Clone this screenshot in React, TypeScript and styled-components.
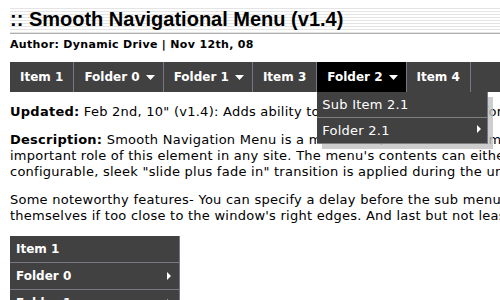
import React from 'react'
import styled, { createGlobalStyle } from 'styled-components'

const GlobalStyle = createGlobalStyle`
  html, body {
    margin: 0;
    padding: 0;
    background: #fff;
    overflow: hidden;
  }
  body {
    font-family: "DejaVu Sans", Verdana, sans-serif;
    color: #000;
  }
`

const Page = styled.div`
  width: 900px;
  padding: 6px 10px 0;
`

const Title = styled.h2`
  margin: 0;
  padding: 2px 0;
  font: bold 20px/23px "Liberation Sans", Arial, sans-serif;
  background: repeating-linear-gradient(
    to bottom,
    #fff 0,
    #fff 2px,
    #e4e4e4 2px,
    #e4e4e4 3px
  );
  border-bottom: 1px solid #b0b0b0;
`

const Byline = styled.div`
  margin-top: 4px;
  font: bold 11px/13px "DejaVu Sans", Verdana, sans-serif;
  letter-spacing: 0.33px;
`

const MenuBar = styled.ul`
  display: flex;
  margin: 11px 0 0;
  padding: 0;
  list-style: none;
  background: #414141;
  font: bold 12px/14px "DejaVu Sans", Verdana, sans-serif;
`

const MenuItem = styled.li`
  position: relative;
`

const MenuLink = styled.a<{ $selected?: boolean; $folder?: boolean }>`
  display: block;
  position: relative;
  padding: 8px ${(p) => (p.$folder ? '23px' : '10px')} 8px 10px;
  border-right: 1px solid #778;
  background: ${(p) => (p.$selected ? '#000' : '#414141')};
  color: #fff;
  text-decoration: none;
  white-space: nowrap;
`

const DownArrow = styled.svg`
  position: absolute;
  top: 12px;
  right: 7px;
`

const RightArrow = styled.svg<{ $top: number; $right: number }>`
  position: absolute;
  top: ${(p) => p.$top}px;
  right: ${(p) => p.$right}px;
`

const SubMenu = styled.ul`
  position: absolute;
  top: 100%;
  left: 0;
  z-index: 10;
  margin: 0;
  padding: 0;
  list-style: none;
  box-shadow: 5px 5px 0 rgba(192, 192, 192, 0.8);
`

const SubLink = styled.a`
  display: block;
  position: relative;
  width: 160px;
  padding: 5px;
  font: normal 13px/15px "DejaVu Sans", Verdana, sans-serif;
  letter-spacing: 0.25px;
  background: #414141;
  color: #fff;
  text-decoration: none;
  border-right: 1px solid #778;
  border-bottom: 1px solid gray;
  white-space: nowrap;
`

const Content = styled.div`
  font-size: 13px;
  line-height: 16px;
  letter-spacing: 0.25px;
`

const Para = styled.p`
  margin: 12px 0;
  white-space: nowrap;
`

const SideMenu = styled.ul`
  margin: 0;
  padding: 0;
  width: 170px;
  list-style: none;
  font: bold 12px/14px "DejaVu Sans", Verdana, sans-serif;
`

const SideLink = styled.a`
  display: block;
  position: relative;
  padding: 6px;
  background: #414141;
  color: #fff;
  text-decoration: none;
  border-right: 1px solid #778;
  border-bottom: 1px solid #778;
`

const Down = () => (
  <DownArrow width='11' height='7' viewBox='0 0 11 7'>
    <polygon points='1,1 10,1 5.5,6' fill='#fff' />
  </DownArrow>
)

const Right = ({ top, right }: { top: number; right: number }) => (
  <RightArrow $top={top} $right={right} width='6' height='10' viewBox='0 0 6 10'>
    <polygon points='1,1 5,5 1,9' fill='#fff' />
  </RightArrow>
)

const topItems = [
  { label: 'Item 1' },
  { label: 'Folder 0', folder: true },
  { label: 'Folder 1', folder: true },
  { label: 'Item 3' },
  { label: 'Folder 2', folder: true, open: true },
  { label: 'Item 4' }
]

export default function App() {
  return (
    <>
      <GlobalStyle />
      <Page>
        <Title>:: Smooth Navigational Menu (v1.4)</Title>
        <Byline>Author: Dynamic Drive | Nov 12th, 08</Byline>

        <MenuBar>
          {topItems.map((item) => (
            <MenuItem key={item.label}>
              <MenuLink href='#' $folder={item.folder} $selected={item.open}>
                {item.label}
                {item.folder && <Down />}
              </MenuLink>
              {item.open && (
                <SubMenu>
                  <li>
                    <SubLink href='#'>Sub Item 2.1</SubLink>
                  </li>
                  <li>
                    <SubLink href='#'>
                      Folder 2.1
                      <Right top={6} right={5} />
                    </SubLink>
                  </li>
                </SubMenu>
              )}
            </MenuItem>
          ))}
        </MenuBar>

        <Content>
          <Para>
            <b>Updated:</b> Feb 2nd, 10" (v1.4): Adds ability to specify a
            custom delay for the menus.
          </Para>
          <Para>
            <b>Description:</b> Smooth Navigation Menu is a multi level, CSS
            list based menu powered using jQuery that makes website navigation
            <br />
            important role of this element in any site. The menu's contents can
            either be from direct markup on the page, or an external file
            <br />
            configurable, sleek "slide plus fade in" transition is applied
            during the unveiling of the sub menus.
          </Para>
          <Para>
            Some noteworthy features- You can specify a delay before the sub
            menus appear and disappear
            <br />
            themselves if too close to the window's right edges. And last but
            not least, the menu supports both orientations.
          </Para>
        </Content>

        <SideMenu>
          <li>
            <SideLink href='#'>Item 1</SideLink>
          </li>
          <li>
            <SideLink href='#'>
              Folder 0
              <Right top={8} right={7} />
            </SideLink>
          </li>
          <li>
            <SideLink href='#'>
              Folder 1
              <Right top={8} right={7} />
            </SideLink>
          </li>
        </SideMenu>
      </Page>
    </>
  )
}
